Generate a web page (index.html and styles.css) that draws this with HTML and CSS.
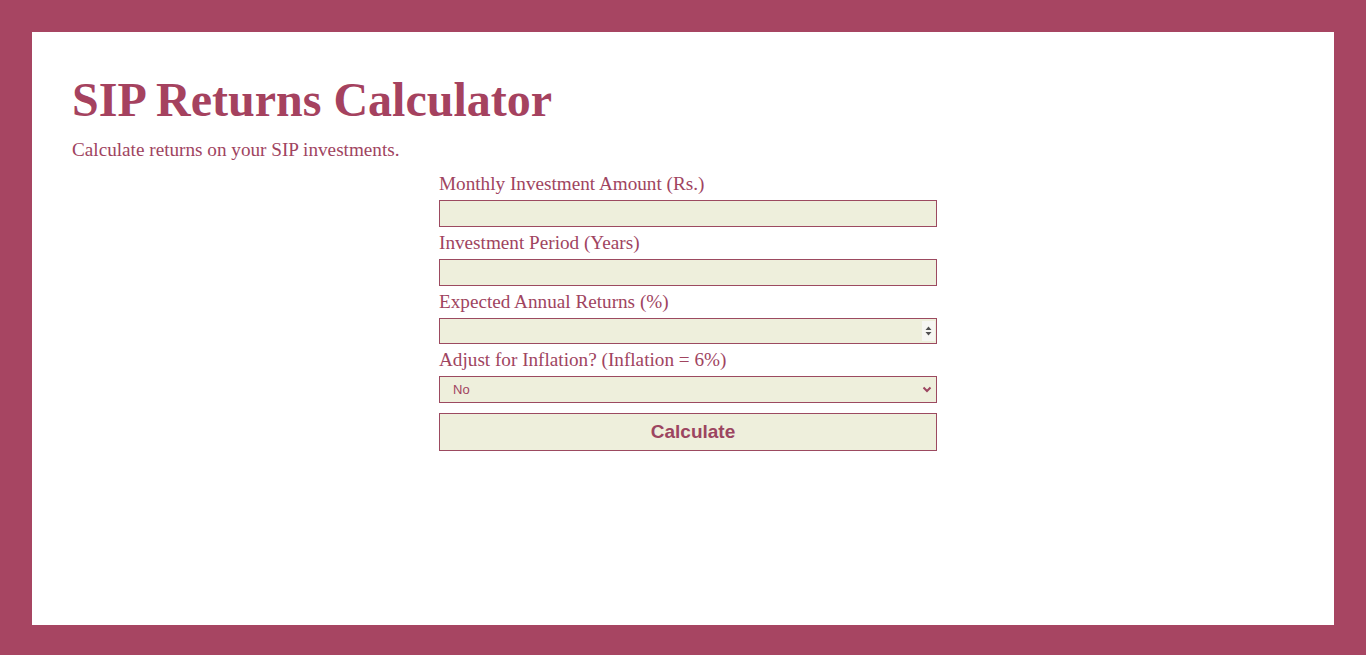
FILE: index.html
```html
<!DOCTYPE html>
<html lang="en">
<head>
<meta charset="utf-8">
<title>SIP Returns Calculator</title>
<link rel="stylesheet" href="styles.css">
</head>
<body>
<main class="card">
  <h1 class="title">SIP Returns Calculator</h1>
  <p class="subtitle">Calculate returns on your SIP investments.</p>
  <div class="form-wrap">
    <form class="form">
      <label class="label" for="amount">Monthly Investment Amount (Rs.)</label>
      <input class="field" id="amount" type="text">
      <label class="label" for="period">Investment Period (Years)</label>
      <input class="field" id="period" type="text">
      <label class="label" for="returns">Expected Annual Returns (%)</label>
      <div class="field-box">
        <input class="field field-num" id="returns" type="text">
        <span class="spinner"><svg width="7" height="10" viewBox="0 0 7 10"><path d="M3.5 0.5 L6.5 4 H0.5 Z M3.5 9.5 L6.5 6 H0.5 Z" fill="#505050"/></svg></span>
      </div>
      <label class="label" for="inflation">Adjust for Inflation? (Inflation = 6%)</label>
      <div class="field-box">
        <select class="field field-select" id="inflation">
          <option>No</option>
          <option>Yes</option>
        </select>
        <svg class="chevron" width="10" height="7" viewBox="0 0 10 7"><path d="M1.5 1.5 L5 5 L8.5 1.5" fill="none" stroke="#9c4560" stroke-width="2"/></svg>
      </div>
      <button class="btn" type="button">Calculate</button>
    </form>
  </div>
</main>
</body>
</html>
```
FILE: styles.css
```css
html, body {
  margin: 0;
  padding: 0;
}
body {
  background: #a74562;
  padding: 32px;
  font-family: "Liberation Serif", "Times New Roman", serif;
  color: #a0445f;
}
.card {
  background: #ffffff;
  height: 593px;
  box-sizing: border-box;
  padding: 40px;
}
.title {
  margin: 0 0 12px 0;
  font-size: 48px;
  line-height: 55px;
  font-weight: bold;
  color: #a5425f;
}
.subtitle {
  margin: 0 0 12px 0;
  font-size: 19.2px;
  line-height: 22px;
}
.form-wrap {
  padding-left: 10px;
}
.form {
  width: 498px;
  margin: 0 auto;
  display: flex;
  flex-direction: column;
}
.label {
  display: block;
  font-size: 19.2px;
  line-height: 22px;
  margin-bottom: 5px;
}
.field {
  display: block;
  box-sizing: border-box;
  width: 100%;
  height: 27px;
  margin: 0 0 5px 0;
  padding: 0 13px;
  background: #eeefdc;
  border: 1px solid #9c4a60;
  border-radius: 0;
  color: #a0445f;
  font-family: "Liberation Sans", Arial, sans-serif;
  font-size: 13px;
  outline: none;
}
.field-box {
  position: relative;
}
.field-num {
  height: 26px;
}
.spinner {
  position: absolute;
  right: 2px;
  top: 3px;
  width: 13px;
  height: 20px;
  background: #f6f6f2;
  display: flex;
  align-items: center;
  justify-content: center;
}
.field-select {
  -webkit-appearance: none;
  appearance: none;
  margin-bottom: 10px;
}
.chevron {
  position: absolute;
  right: 5px;
  top: 10px;
  pointer-events: none;
}
.btn {
  box-sizing: border-box;
  width: 100%;
  height: 38px;
  background: #eeefdc;
  border: 1px solid #9c4a60;
  border-radius: 0;
  color: #9c4560;
  font-family: "Liberation Sans", Arial, sans-serif;
  font-size: 19px;
  font-weight: bold;
  padding: 0 0 0 10px;
}
```
